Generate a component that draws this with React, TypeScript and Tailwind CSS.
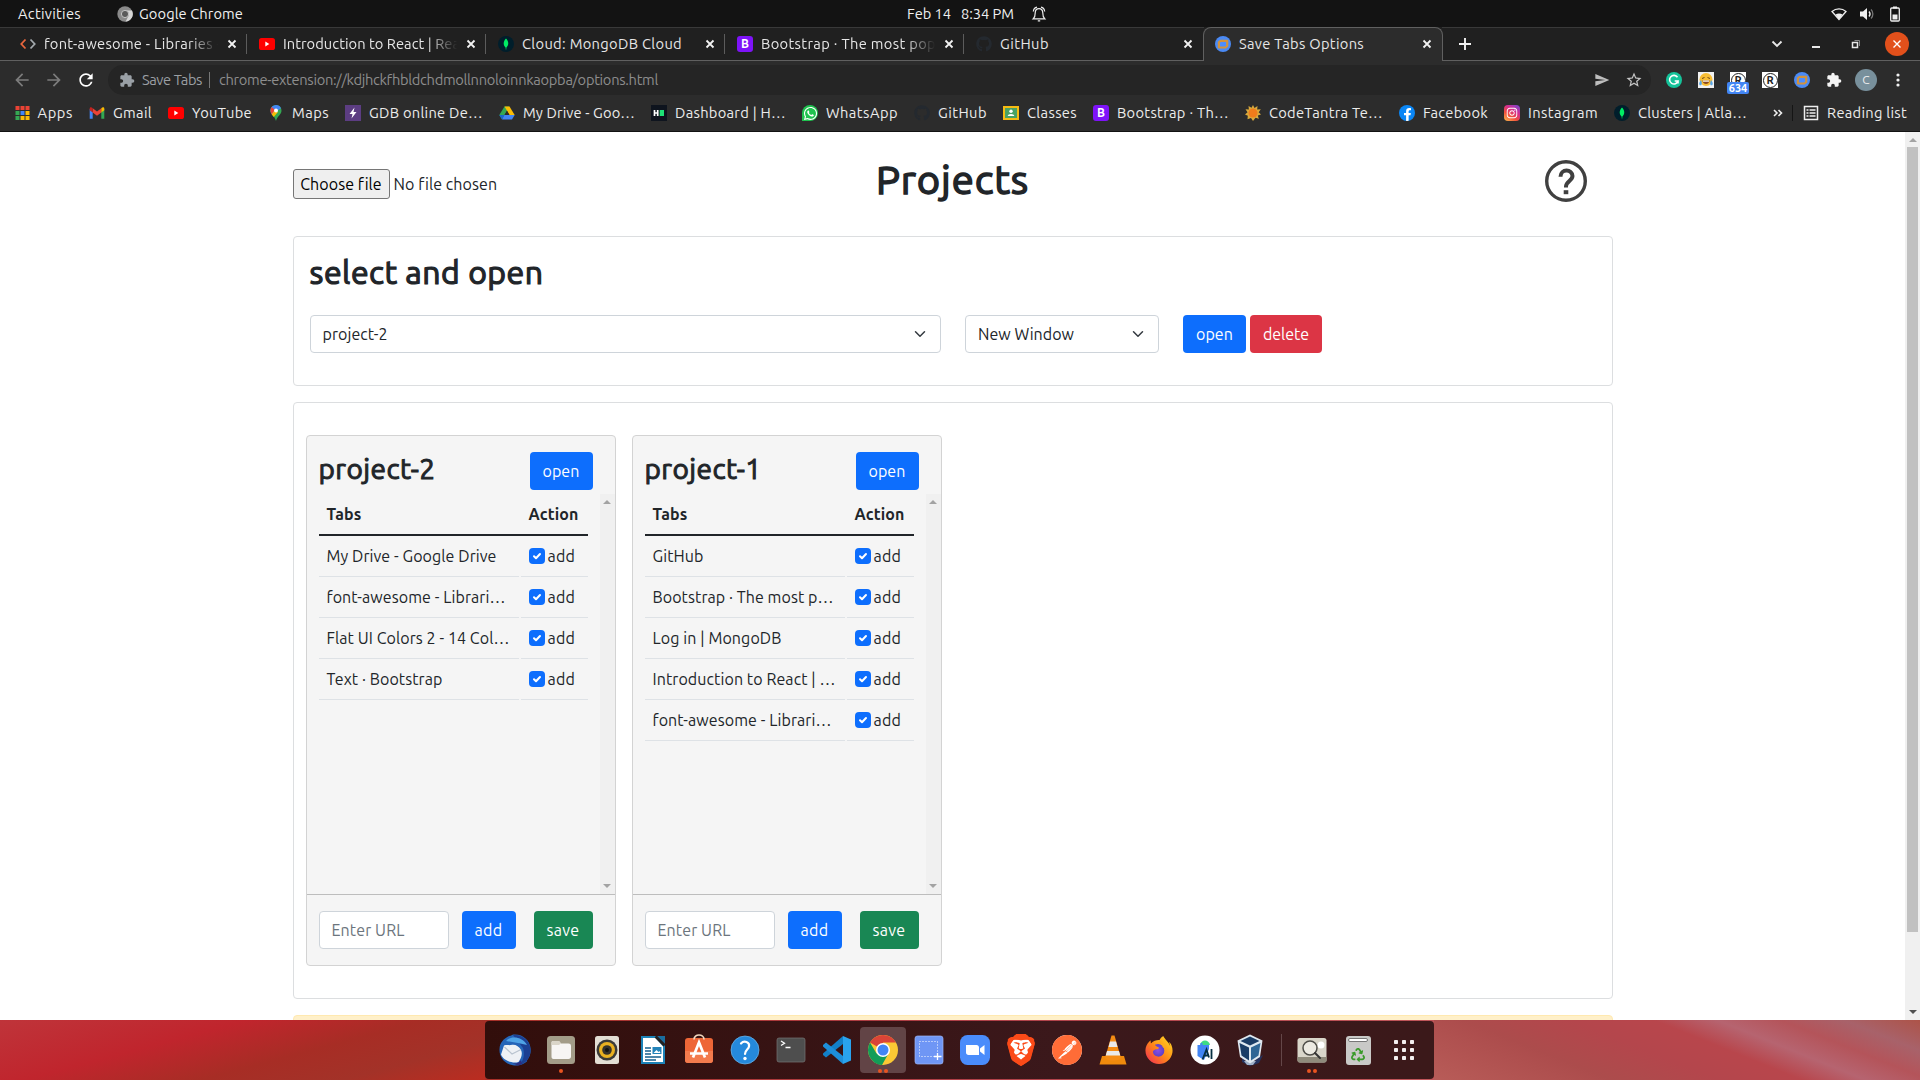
import { useLayoutEffect, useRef, type ReactNode } from "react";
import { MdArrowBack, MdArrowForward, MdRefresh, MdExtension, MdSend, MdStarBorder } from "react-icons/md";
import { FaGithub, FaRecycle, FaInstagram, FaWhatsapp, FaFacebookF } from "react-icons/fa";
import { SiBrave, SiPostman, SiFirefoxbrowser } from "react-icons/si";

/* A single line of text tracked so that it fills exactly `w` pixels. */
function T({ w, className = "", children }: { w: number; className?: string; children: string }) {
  const ref = useRef<HTMLSpanElement>(null);
  useLayoutEffect(() => {
    const el = ref.current;
    if (!el) return;
    el.style.letterSpacing = "0px";
    const natural = el.getBoundingClientRect().width;
    el.style.letterSpacing = `${(w - natural) / children.length}px`;
  }, [w, children]);
  return (
    <span ref={ref} className={`inline-block shrink-0 whitespace-pre ${className}`}>
      {children}
    </span>
  );
}

/* ---------- small icons ---------- */

const YouTube = () => (
  <svg viewBox="0 0 16 16" className="size-4">
    <rect x="0" y="2" width="16" height="12" rx="2.6" fill="#f00" />
    <path d="M6.3 5.5v5l4-2.5z" fill="#fff" />
  </svg>
);
const Mongo = () => (
  <svg viewBox="0 0 16 16" className="size-4">
    <circle cx="8" cy="8" r="8" fill="#001e2b" />
    <path d="M8 2.6c2.8 2.9 3.2 6.5.3 9.1V13.4h-.6v-1.7C4.8 9.1 5.2 5.5 8 2.6z" fill="#00ed64" />
  </svg>
);
const Boot = () => (
  <span className="flex size-4 items-center justify-center rounded-[3px] bg-[#7e13f8] text-[12px] leading-4 font-bold text-white">B</span>
);
const GitHub = () => <FaGithub className="size-4 text-[#24292f]" />;
const SaveTabs = () => (
  <svg viewBox="0 0 16 16" className="size-4">
    <circle cx="8" cy="8" r="8" fill="#4a8af5" />
    <path d="M5.6 4.8h6.600v5.200l-1.700 1.500H3.900V6.300z" fill="#4c8dff" stroke="#d0923f" strokeWidth="2.200" strokeLinejoin="round" />
  </svg>
);
const Brackets = () => (
  <svg viewBox="0 0 16 16" className="size-4" fill="none" strokeWidth="1.8">
    <path d="M5.500 3.500 1.300 8l4.200 4.500" stroke="#e8663d" />
    <path d="M10.500 3.500 14.700 8l-4.200 4.500" stroke="#a3a9ad" />
  </svg>
);
const AppsGrid = () => (
  <svg viewBox="0 0 16 16" className="size-4">
    {["#ea4335", "#ea4335", "#ea4335", "#34a853", "#4285f4", "#fbbc04", "#34a853", "#fbbc04", "#fbbc04"].map((c, i) => (
      <rect key={i} x={1.5 + (i % 3) * 5} y={1 + Math.floor(i / 3) * 5} width="4" height="4" fill={c} />
    ))}
  </svg>
);
const Gmail = () => (
  <svg viewBox="0 0 16 16" className="size-4">
    <path d="M.7 4v9.800h3V7.200z" fill="#4285f4" />
    <path d="M15.300 4v9.800h-3V7.200z" fill="#34a853" />
    <path d="M3.700 3.200 8 6.500l4.300-3.300v4.300L8 10.700 3.700 7.500z" fill="#ea4335" />
    <path d="M.7 3.800c0-1.700 1.700-1.900 3-.6v4.300L.7 5.300z" fill="#c5221f" />
    <path d="M15.300 3.800c0-1.700-1.700-1.900-3-.6v4.300l3-2.200z" fill="#fbbc04" />
  </svg>
);
const Maps = () => (
  <svg viewBox="0 0 16 16" className="size-4">
    <path d="M8 0a5.500 5.500 0 0 1 5.500 5.500C13.500 9.500 9.300 11 8 16 6.700 11 2.500 9.500 2.500 5.500A5.500 5.500 0 0 1 8 0z" fill="#34a853" />
    <path d="M8 0a5.500 5.500 0 0 1 5 3.200L4 9.500C3.200 8.600 2.500 7.300 2.500 5.500A5.500 5.500 0 0 1 8 0z" fill="#4285f4" />
    <path d="M3.700 2 7 5l-3.300 4.200C2 6.800 2 4 3.700 2z" fill="#ea4335" />
    <path d="M10 7 5.700 12C4.800 10.800 4.200 10 3.700 9.200L7 5z" fill="#fbbc04" />
    <circle cx="8" cy="5.500" r="2" fill="#fff" />
  </svg>
);
const Gdb = () => (
  <svg viewBox="0 0 16 16" className="size-4">
    <path d="M0 0h16v16H0z" fill="#5c3d82" />
    <path d="M9.500 2.500 4.500 9h3l-1 4.500 5-6.500h-3z" fill="#fff" />
  </svg>
);
const Drive = () => (
  <svg viewBox="0 0 16 16" className="size-4">
    <path d="M5.500 1.500h5L8 5.800 3 14.300.3 10z" fill="#34a853" />
    <path d="M10.500 1.500 15.700 10H10.500L5.500 1.500z" fill="#fbbc04" />
    <path d="M5.300 10h10.400L13 14.500H3z" fill="#4285f4" />
    <path d="M.3 10h5L3 14.500z" fill="#1967d2" />
    <path d="M8 5.800 10.400 10H5.500z" fill="#2b2b2b" />
  </svg>
);
const Hacker = () => (
  <svg viewBox="0 0 16 16" className="size-4">
    <path d="M0 0h16v16H0z" fill="#0e141e" />
    <path d="M3.500 5v6M6.700 5v6M3 8h3.500" stroke="#fff" strokeWidth="1.700" />
    <path d="M8.700 5h4.300v6H8.700z" fill="#1ee276" />
  </svg>
);
const WhatsApp = () => (
  <span className="flex size-4 items-center justify-center rounded-full rounded-bl-[3px] bg-[#1fc24f]">
    <FaWhatsapp className="size-[15px] text-white" />
  </span>
);
const Classes = () => (
  <svg viewBox="0 0 16 16" className="size-4">
    <path d="M0 1h16v14H0z" fill="#f6bb13" />
    <path d="M2 3h12v10H2z" fill="#4aa265" />
    <circle cx="8" cy="6.300" r="1.700" fill="#fff" />
    <path d="M4.700 11c0-2.700 6.600-2.700 6.600 0z" fill="#fff" />
  </svg>
);
const Sun = () => (
  <svg viewBox="0 0 16 16" className="size-4">
    <path d="M8 0l1.500 3 3-2-.3 3.500 3.600-.2-2.100 2.900L16 9.500l-3.200 1 1 3.200-3.300-.9L8 16l-2-3-3.500 1.200.3-3.500L0 9.500 2.500 7.300.5 4.300l3.400.2L3.500 1l3 1.800z" fill="#d9a93c" />
    <circle cx="8" cy="8" r="4.500" fill="#f07c1b" />
  </svg>
);
const Facebook = () => (
  <span className="flex size-4 items-end justify-center overflow-hidden rounded-full bg-[#0a86f5]">
    <FaFacebookF className="size-[13px] text-white" />
  </span>
);
const Instagram = () => (
  <span className="flex size-4 items-center justify-center rounded-[4px] bg-[linear-gradient(35deg,#fdc04e,#f2503c_35%,#d22c92_65%,#6a4bd8)]">
    <FaInstagram className="size-3 text-white" />
  </span>
);

/* ---------- desktop top bar ---------- */

function TopBar() {
  return (
    <div className="grid h-[27px] grid-cols-3 items-center bg-[#131313] text-[14.67px] text-[#f0f0f0]">
      <div className="flex items-center pl-[18px]">
        <T w={63}>Activities</T>
        <svg viewBox="0 0 16 16" className="ml-[36px] size-4">
          <circle cx="8" cy="8" r="7.700" fill="#8a8a8a" />
          <path d="M8 4.500h7A7.700 7.700 0 0 1 8.500 15.700l3-5.700z" fill="#d6d6d6" />
          <circle cx="8" cy="8" r="3.600" fill="#5a5a5a" stroke="#c4c4c4" />
        </svg>
        <T w={104} className="ml-1.5">Google Chrome</T>
      </div>
      <div className="flex items-center justify-center pl-[34px]">
        <T w={44}>Feb 14</T>
        <T w={53} className="ml-2.5">8:34 PM</T>
        <svg viewBox="0 0 16 16" className="ml-[17px] size-4" fill="none" stroke="#ececec" strokeWidth="1.200">
          <path d="M2.300 12.800h11.400c-1.400-1.200-1.900-2.600-1.900-5.800C11.800 4.200 10.300 2.600 8 2.600S4.200 4.200 4.200 7c0 3.200-.5 4.600-1.900 5.800z" />
          <path d="M6 1.200C4 1.600 2.600 3 2.300 5.500M10 1.200c2 .4 3.400 1.800 3.700 4.300M6.800 14.900h2.400" />
        </svg>
      </div>
      <div className="flex items-center justify-end gap-3 pr-[17px]">
        <svg viewBox="0 0 16 16" className="size-4">
          <path d="M1 5.500C5 2 11 2 15 5.500L8 13.500z" fill="none" stroke="#eee" strokeWidth="1.300" />
          <path d="M4.500 8.500c2-1.500 5-1.500 7 0L8 13.500z" fill="#eee" />
        </svg>
        <svg viewBox="0 0 16 16" className="size-4">
          <path d="M1 5.500h3L8 2v12L4 10.500H1z" fill="#eee" />
          <path d="M10 5.500c1.300 1.500 1.300 3.500 0 5" fill="none" stroke="#eee" strokeWidth="1.300" />
          <path d="M12 3.500c2.500 2.500 2.500 6.500 0 9" fill="none" stroke="#777" strokeWidth="1.300" />
        </svg>
        <svg viewBox="0 0 16 16" className="size-4">
          <path d="M6 .5h4v2H6z" fill="#eee" />
          <rect x="3.700" y="2" width="8.600" height="13" rx="1" fill="none" stroke="#eee" strokeWidth="1.300" />
          <path d="M5.500 8.500h5v5h-5z" fill="#eee" />
        </svg>
      </div>
    </div>
  );
}

/* ---------- browser chrome ---------- */

const Close = () => (
  <svg viewBox="0 0 10 10" className="size-2.5 shrink-0" stroke="#f2f2f2" strokeWidth="1.800">
    <path d="M1.500 1.500l7 7M8.500 1.500l-7 7" />
  </svg>
);

const tabs: { icon: ReactNode; title: string; w: number; fade?: boolean }[] = [
  { icon: <Brackets />, title: "font-awesome - Libraries -", w: 177, fade: true },
  { icon: <YouTube />, title: "Introduction to React | Rea", w: 177, fade: true },
  { icon: <Mongo />, title: "Cloud: MongoDB Cloud", w: 160 },
  { icon: <Boot />, title: "Bootstrap · The most pop", w: 175, fade: true },
  { icon: <GitHub />, title: "GitHub", w: 49 },
];

function TabStrip() {
  return (
    <div className="flex h-[34px] bg-[#202020] text-[14.67px] text-[#e6e6e6]">
      <div className="flex w-[1204px] border-t border-b border-t-[#393939] border-b-[#606060] pl-2">
        {tabs.map((t, i) => (
          <div key={i} className="flex w-[239px] items-center pl-3">
            {t.icon}
            <div className={`ml-2 w-[176px] ${t.fade ? "[mask-image:linear-gradient(90deg,#000_82%,transparent_99%)]" : ""}`}>
              <T w={t.w}>{t.title}</T>
            </div>
            <span className="ml-[7px]"><Close /></span>
            {i < 4 && <span className="ml-auto h-5 w-px bg-[#5c5c5c]" />}
          </div>
        ))}
      </div>
      <div className="z-10 -mx-px flex w-[240px] items-center rounded-t-lg border border-b-0 border-[#606060] bg-[#2c2c2c] pb-px pl-[11px]">
        <SaveTabs />
        <div className="ml-2 w-[176px]"><T w={125}>Save Tabs Options</T></div>
        <span className="ml-[7px]"><Close /></span>
      </div>
      <div className="flex flex-1 items-center border-t border-b border-t-[#393939] border-b-[#606060] pl-4">
        <svg viewBox="0 0 14 14" className="size-[14px]" stroke="#f2f2f2" strokeWidth="1.900">
          <path d="M7 1v12M1 7h12" />
        </svg>
        <svg viewBox="0 0 12 12" className="ml-auto size-3" fill="none" stroke="#e8e8e8" strokeWidth="1.900">
          <path d="M1.500 3.500 6 8l4.500-4.500" />
        </svg>
        <span className="mt-1.5 ml-[29px] h-[1.5px] w-2 bg-[#e8e8e8]" />
        <svg viewBox="0 0 10 10" className="ml-[31px] size-2.5" fill="none" stroke="#e8e8e8">
          <path d="M1.500 3.500h5v5h-5z" strokeWidth="1.500" />
          <path d="M3.500 1.500h5v5.500" stroke="#888" />
        </svg>
        <span className="mr-[11px] ml-6 flex size-6 items-center justify-center rounded-full bg-[#e2501b]">
          <svg viewBox="0 0 10 10" className="size-2.5" stroke="#fff" strokeWidth="1.400">
            <path d="M1.500 1.500l7 7M8.500 1.500l-7 7" />
          </svg>
        </span>
      </div>
    </div>
  );
}

const Registered = () => (
  <span className="flex size-4 items-center justify-center bg-white">
    <span className="flex size-[15px] items-center justify-center rounded-full border border-[#222] text-[11px] leading-none font-bold text-[#222]">R</span>
  </span>
);

function Toolbar() {
  return (
    <div className="flex h-[37px] items-center bg-[#2c2c2c] pt-px pl-3 text-[14.67px]">
      <MdArrowBack className="size-5 text-[#7c7c7c]" />
      <MdArrowForward className="ml-3 size-5 text-[#7c7c7c]" />
      <MdRefresh className="ml-3 size-5 text-white" />
      <div className="ml-3 flex h-[30px] w-[1543px] items-center rounded-full bg-[#252525] pl-[11px]">
        <MdExtension className="size-4 text-[#9aa0a6]" />
        <T w={60} className="ml-[7px] text-[#9b9fa3]">Save Tabs</T>
        <span className="ml-[7px] h-4 w-px bg-[#777]" />
        <T w={439} className="ml-[9px] text-[#8d8d8d]">chrome-extension://kdjhckfhbldchdmollnnoloinnkaopba/options.html</T>
        <MdSend className="ml-auto size-4 text-[#bdbdbd]" />
        <MdStarBorder className="mr-2 ml-[15px] size-[18px] text-[#c6c6c6]" />
      </div>
      <div className="ml-[15px] flex items-center gap-4">
        <span className="flex size-4 items-center justify-center rounded-full bg-[#15c39a]">
          <svg viewBox="0 0 16 16" className="size-4" fill="none" stroke="#fff" strokeWidth="1.600">
            <path d="M11.500 5.300A4.300 4.300 0 1 0 12 9H8.700M12 8.200v3.300" />
          </svg>
        </span>
        <svg viewBox="0 0 16 16" className="size-4">
          <path d="M0 0h16v16H0z" fill="#f1f1f1" />
          <circle cx="8" cy="7.500" r="6.500" fill="#f9be34" />
          <path d="M4.500 8.500h7c0 4.500-7 4.500-7 0z" fill="#8b4a20" />
          <path d="M5 8.500h6v1.200H5z" fill="#fff" />
          <path d="M4 6.500l2.500-1M12 6.500l-2.500-1" stroke="#6b4416" />
          <path d="M3 8c-2.300 2.500-2.300 5.300-.5 5.300S4 10.500 3 8zM13 8c2.300 2.500 2.300 5.300.5 5.300S12 10.500 13 8z" fill="#58a6e8" />
        </svg>
        <span className="relative">
          <Registered />
          <span className="absolute top-[10px] left-[-3px] flex h-3 w-[22px] items-center justify-center rounded-[2px] bg-[#4285f4] text-[11px] leading-none font-bold text-white">634</span>
        </span>
        <Registered />
        <SaveTabs />
        <MdExtension className="size-4 text-[#f4f4f4]" />
        <span className="-mx-[3px] flex size-[22px] items-center justify-center rounded-full bg-[#78909c] text-[12px] text-[#eee]">C</span>
        <svg viewBox="0 0 16 16" className="size-4" fill="#f0f0f0">
          <circle cx="8" cy="3" r="1.600" />
          <circle cx="8" cy="8" r="1.600" />
          <circle cx="8" cy="13" r="1.600" />
        </svg>
      </div>
    </div>
  );
}

const bookmarks: [ReactNode, string, number][] = [
  [<AppsGrid />, "Apps", 35.5],
  [<Gmail />, "Gmail", 39],
  [<YouTube />, "YouTube", 60],
  [<Maps />, "Maps", 37],
  [<Gdb />, "GDB online De…", 114],
  [<Drive />, "My Drive - Goo…", 112],
  [<Hacker />, "Dashboard | H…", 111],
  [<WhatsApp />, "WhatsApp", 72],
  [<GitHub />, "GitHub", 49],
  [<Classes />, "Classes", 50],
  [<Boot />, "Bootstrap · Th…", 112],
  [<Sun />, "CodeTantra Te…", 114],
  [<Facebook />, "Facebook", 65],
  [<Instagram />, "Instagram", 70],
  [<Mongo />, "Clusters | Atla…", 109],
];

function Bookmarks() {
  return (
    <div className="flex h-[34px] items-center border-b border-[#121212] bg-[#2c2c2c] pb-[3px] pl-[13.5px] text-[14.67px] text-[#ececec]">
      <div className="flex gap-4">
        {bookmarks.map(([icon, label, w], i) => (
          <div key={i} className="flex items-center gap-2">
            {icon}
            <T w={w}>{label}</T>
          </div>
        ))}
      </div>
      <svg viewBox="0 0 10 10" className="ml-[26px] size-2.5" fill="none" stroke="#eee" strokeWidth="1.600">
        <path d="M1 2l3 3-3 3M5.500 2l3 3-3 3" />
      </svg>
      <span className="ml-[9px] h-4 w-px bg-[#151515]" />
      <svg viewBox="0 0 16 16" className="ml-[10px] size-4" fill="none" stroke="#eee" strokeWidth="1.500">
        <path d="M1.500 1.500h13v13h-13zM3.500 5h2M3.500 8h2M3.500 11h2M6.500 5h6M6.500 8h6M6.500 11h6" />
      </svg>
      <T w={80} className="ml-2">Reading list</T>
    </div>
  );
}

/* ---------- page ---------- */

const Select = ({ label, tw, className }: { label: string; tw: number; className: string }) => (
  <div className={`flex h-[38px] items-center justify-between rounded-[4px] border border-[#ced4da] bg-white pr-[14px] pl-3 ${className}`}>
    <T w={tw}>{label}</T>
    <svg viewBox="0 0 16 16" className="size-3" fill="none" stroke="#343a40" strokeWidth="2" strokeLinecap="round" strokeLinejoin="round">
      <path d="M2 5l6 6 6-6" />
    </svg>
  </div>
);

const tone = { blue: "bg-[#0d6efd]", red: "bg-[#dc3545]", green: "bg-[#198754]" };

const Button = ({ label, tw, color, className = "" }: { label: string; tw: number; color: keyof typeof tone; className?: string }) => (
  <button className={`flex h-[38px] items-center rounded-[4px] px-[13px] text-white ${tone[color]} ${className}`}>
    <T w={tw}>{label}</T>
  </button>
);

type Project = { name: string; w: number; rows: [string, number][] };
const projects: Project[] = [
  {
    name: "project-2",
    w: 117,
    rows: [
      ["My Drive - Google Drive", 170],
      ["font-awesome - Librari…", 179],
      ["Flat UI Colors 2 - 14 Col…", 183],
      ["Text · Bootstrap", 116],
    ],
  },
  {
    name: "project-1",
    w: 117,
    rows: [
      ["GitHub", 51],
      ["Bootstrap · The most p…", 181],
      ["Log in | MongoDB", 129],
      ["Introduction to React | …", 183],
      ["font-awesome - Librari…", 179],
    ],
  },
];

const Arrow = ({ down, className = "" }: { down?: boolean; className?: string }) => (
  <svg viewBox="0 0 8 4" className={`h-1 w-2 ${className}`}>
    <path d={down ? "M0 0h8L4 4z" : "M0 4h8L4 0z"} fill="currentColor" />
  </svg>
);

function ProjectCard({ name, w, rows }: Project) {
  return (
    <div className="w-[310px] rounded-[4px] border border-[#d3d3d3] bg-[#f5f5f5]">
      <div className="flex h-[58px] justify-between pt-4 pr-[22px] pl-3">
        <h3 className="text-[28px] leading-[34px] [-webkit-text-stroke:1px_#212529]"><T w={w}>{name}</T></h3>
        <Button label="open" tw={37} color="blue" />
      </div>
      <div className="flex h-[400px] justify-between">
        <div className="ml-3 w-[269px]">
          <div className="flex h-[42px] items-center border-b-2 border-[#212529] font-bold">
            <T w={35} className="ml-2">Tabs</T>
            <T w={50} className="ml-[167px]">Action</T>
          </div>
          {rows.map(([title, tw]) => (
            <div key={title} className="flex h-[41px] gap-[2px]">
              <div className="flex w-[200px] items-center border-b border-[#dee2e6] pl-2"><T w={tw}>{title}</T></div>
              <div className="flex w-[67px] items-center gap-[3px] border-b border-[#dee2e6] pl-2">
                <svg viewBox="0 0 16 16" className="size-4">
                  <rect width="16" height="16" rx="4" fill="#0d6efd" />
                  <path d="M5 8.300l2 2 4-4.300" fill="none" stroke="#fff" strokeWidth="2" strokeLinecap="round" strokeLinejoin="round" />
                </svg>
                <T w={27.5}>add</T>
              </div>
            </div>
          ))}
        </div>
        <div className="flex w-[15px] flex-col items-center justify-between bg-[#f0f0f0] py-1.5 text-[#a3a3a3]">
          <Arrow />
          <Arrow down />
        </div>
      </div>
      <div className="flex border-t border-[#bdbdbd] py-4 pl-3">
        <div className="flex h-[38px] w-[130px] items-center rounded-[4px] border border-[#ced4da] bg-white pl-3 text-[#6c757d]">
          <T w={73}>Enter URL</T>
        </div>
        <Button label="add" tw={28} color="blue" className="ml-[13px]" />
        <Button label="save" tw={33} color="green" className="ml-[18px]" />
      </div>
    </div>
  );
}

function Page() {
  return (
    <div className="flex h-[888px] justify-between overflow-hidden bg-white text-[16px] text-[#212529]">
      <div className="ml-[292.5px] w-[1320px]">
        <div className="grid h-[104px] grid-cols-3 items-start">
          <div className="flex items-center pt-[37px]">
            <div className="flex h-[30px] w-[97px] items-center justify-center rounded-[3px] border border-[#767676] bg-[#efefef] text-black"><T w={81}>Choose file</T></div>
            <T w={103} className="ml-1">No file chosen</T>
          </div>
          <h1 className="pt-6 text-center text-[40px] leading-[48px] [-webkit-text-stroke:1.5px_#212529]"><T w={153}>Projects</T></h1>
          <svg viewBox="0 0 42 42" className="mt-7 mr-[26px] size-[42px] justify-self-end" fill="none" stroke="#404040">
            <circle cx="21" cy="21" r="19.300" strokeWidth="3.400" />
            <path d="M15.500 16.800c0-8.400 12-8 12-.7 0 4.500-6.500 5.400-6.500 10.400v1" strokeWidth="4" />
            <path d="M21 30.200v4" strokeWidth="4.600" />
          </svg>
        </div>
        <div className="h-[150px] rounded-[4px] border border-[#dcdee0] px-4 pt-4">
          <h2 className="h-[62px] text-[32px] leading-[38px] [-webkit-text-stroke:1.2px_#212529]"><T w={234}>select and open</T></h2>
          <div className="flex">
            <Select label="project-2" tw={65} className="w-[631.5px]" />
            <Select label="New Window" tw={96} className="ml-6 w-[194px]" />
            <Button label="open" tw={37} color="blue" className="ml-6" />
            <Button label="delete" tw={46} color="red" className="ml-1" />
          </div>
        </div>
        <div className="mt-4 flex h-[597px] items-start gap-4 rounded-[4px] border border-[#dcdee0] pt-8 pl-3">
          {projects.map((p) => <ProjectCard key={p.name} {...p} />)}
        </div>
        <div className="mt-4 h-10 rounded-[4px] border border-[#ffe9b0] bg-[#fff0c9]" />
      </div>
      <div className="flex w-[15px] flex-col items-center bg-[#f0f0f0]">
        <Arrow className="mt-1.5 text-[#a3a3a3]" />
        <div className="mt-[5px] h-[785px] w-[11px] bg-[#c1c1c1]" />
        <Arrow down className="mt-auto mb-1.5 text-[#505050]" />
      </div>
    </div>
  );
}

/* ---------- dock ---------- */

const S = ({ children }: { children: ReactNode }) => <svg viewBox="0 0 32 32" className="size-8">{children}</svg>;

const Thunderbird = () => (
  <S>
    <path d="M10 2c3 0 3-2 5-1.500 9-.5 16 6 16.700 14.500.3 6-2 9-3.700 11.500 0 1-.5 1.500-1.500 2-2 1.500-5 2.500-8 3C6 32 0 23 .5 15 .8 9 4 5 10 2z" fill="#2565b8" />
    <path d="M14 1c10-1 18 7 17.500 16C31 25 26 30 19.500 31.500 25 27 26 20 24 14z" fill="#1c3f92" />
    <path d="M7 7C12 1 24 3 28 11L19 9z" fill="#4fa3e6" />
    <path d="M5 11.500c3-1 5 0 7-.5 4-1 8 1 10 5 2 4 0 9-2.500 12C13 30 4 26 2 20.500z" fill="#eef1f5" />
    <path d="M5.500 13l7.500 7 9-4.500" fill="none" stroke="#b9c3cf" strokeWidth="1.200" />
    <path d="M13 29c4 1 7 0 9-3l1 4-4 1.500z" fill="#2b2f80" />
  </S>
);
const Files = () => (
  <S>
    <rect x="2" y="2" width="28" height="28" rx="3.500" fill="#a39c88" />
    <path d="M6.500 9c0-1.500.5-2 2-2H14l2 2.500h7.500c1.500 0 2.500.8 2.500 2.500v10.500c0 1.500-1 2.500-2.500 2.500h-15c-1.500 0-2-1-2-2.500z" fill="#f7f5f3" />
    <path d="M6.500 11V9c0-1.500.5-2 2-2H14l2 2.500-2 1.500z" fill="#dad5c8" />
  </S>
);
const Rhythmbox = () => (
  <S>
    <rect x="4" y="2" width="24" height="28" rx="2.500" fill="#e3ded4" />
    <circle cx="16" cy="16" r="10.500" fill="#3a3a38" />
    <circle cx="16" cy="16" r="8" fill="#e8b021" />
    <circle cx="16" cy="16" r="4.800" fill="#33312c" />
    <circle cx="16" cy="16" r="2" fill="#111" />
  </S>
);
const Writer = () => (
  <S>
    <path d="M5 3h14L27 12v17H5z" fill="#fff" stroke="#1c83b8" strokeWidth="2" />
    <path d="M20 2h8v8z" fill="#1a6d9e" />
    <path d="M18.500 2.500l9 9" stroke="#222" strokeWidth="2.500" />
    <path d="M8 14h6M8 17h6M8 20h6M8 23h16M8 26h11" stroke="#155f8d" strokeWidth="1.400" />
    <path d="M15.500 13h9v7h-9z" fill="#2383b9" />
    <path d="M16.500 19l3-3 2 2 1-1 1 2z" fill="#fff" />
  </S>
);
const Software = () => (
  <S>
    <rect x="2" y="4" width="28" height="25" rx="3" fill="#ee6637" />
    <path d="M2 17h28v9a3 3 0 0 1-3 3H5a3 3 0 0 1-3-3z" fill="#f37b4d" />
    <path d="M11 5.500c0-6 10-6 10 0" fill="none" stroke="#f1d7bf" strokeWidth="1.700" />
    <path d="M10 23.500l6-15 6 15M7 19.500h18" fill="none" stroke="#fff" strokeWidth="2.700" />
  </S>
);
const Help = () => (
  <S>
    <circle cx="16" cy="16" r="14" fill="#2589dc" stroke="#6fb9ee" strokeWidth=".7" />
    <path d="M12 9.500c3-3.500 9-1.500 8 3-.6 3-4 3.500-4 7.500" fill="none" stroke="#fff" strokeWidth="2.200" strokeLinecap="round" />
    <circle cx="16" cy="24.500" r="1.700" fill="#fff" />
  </S>
);
const Terminal = () => (
  <S>
    <rect x="2" y="4" width="28" height="24" rx="2" fill="#4e4e4e" stroke="#777" strokeWidth=".7" />
    <path d="M6 7l3.500 2.300L6 11.500M10.500 13.500h5" fill="none" stroke="#fff" strokeWidth="1.300" />
  </S>
);
const Code = () => (
  <S>
    <path d="M22 2l8 3.500v21L22 30z" fill="#29a3ee" />
    <path d="M22 2v8L5 23.500 2 21v-1.500z" fill="#1280c8" />
    <path d="M22 30v-8L5 8.500 2 11v1.500z" fill="#1d8fda" />
  </S>
);
const Chrome = () => (
  <S>
    <circle cx="16" cy="16" r="15" fill="#fbc834" />
    <path d="M16 16 3 8.500A15 15 0 0 1 29 8.500H16z" fill="#db4437" />
    <path d="M3 8.500A15 15 0 0 0 15 31l6.500-11.500L16 16l-6.500 3.500z" fill="#129d58" />
    <circle cx="16" cy="16" r="7" fill="#fff" />
    <circle cx="16" cy="16" r="5.500" fill="#4285f4" />
  </S>
);
const Screenshot = () => (
  <S>
    <rect x="2" y="2" width="28" height="28" rx="2.500" fill="#6f96f5" stroke="#a0b9f8" strokeWidth=".7" />
    <path d="M6.500 7.500h18v15h-18z" fill="none" stroke="#fff" strokeDasharray="1 2" />
    <path d="M21 22.500h7.500M24.500 19v7" stroke="#fff" strokeWidth="1.300" />
  </S>
);
const Zoom = () => (
  <S>
    <rect x="1" y="1" width="30" height="30" rx="7.500" fill="#4a8cfb" />
    <path d="M7 11h10.500c1.500 0 2.500 1 2.500 2.500V21H9.500C8 21 7 20 7 18.500zM21 14.500l4.500-3.500v10L21 17.500z" fill="#fff" />
  </S>
);
const Brave = () => (
  <span className="relative flex size-8 items-center justify-center">
    <svg viewBox="0 0 32 32" className="size-8">
      <path d="M10 1h12l3 3h3l2 5-1 3-4 14-9 6-9-6L3 12 2 9l2-5h3z" fill="#fb4a18" />
      <path d="M8 6l4-.5 4 1 4-1 4 .5 4 6-4 8.500-1 3-7 5-7-5-1-3L4 12z" fill="#fff" />
    </svg>
    <SiBrave className="absolute size-8 text-[#fb4a18]" />
  </span>
);
const Vlc = () => (
  <S>
    <path d="M5 22h22l2.500 8.500h-27z" fill="#f08a0c" />
    <path d="M14.500 1.500h3L24 24c-2 3.500-14 3.500-16 0z" fill="#f58c14" />
    <path d="M13 7.500h6l1.500 5.500h-9zM10 17h12l1.300 4.500H8.700z" fill="#e9e9e9" />
  </S>
);
const Firefox = () => (
  <svg viewBox="0 0 32 32" className="size-8">
    <linearGradient id="fox" x1="1" y1="0" x2="0" y2="1">
      <stop offset="0" stopColor="#ffe226" />
      <stop offset=".5" stopColor="#ff8a16" />
      <stop offset="1" stopColor="#f0255a" />
    </linearGradient>
    <radialGradient id="globe">
      <stop offset="0" stopColor="#8a4fe6" />
      <stop offset="1" stopColor="#5b3fc4" />
    </radialGradient>
    <circle cx="16" cy="17" r="11" fill="url(#fox)" />
    <circle cx="15" cy="16.500" r="6.500" fill="url(#globe)" />
    <SiFirefoxbrowser x="2" y="2" size={28} fill="url(#fox)" color="url(#fox)" />
  </svg>
);
const Android = () => (
  <S>
    <circle cx="16" cy="16" r="14.500" fill="#fff" />
    <path d="M11 11c1-6 9-6 10 0z" fill="#3ddc84" />
    <path d="M8.500 11h3V9h2v2h6.500v4l-5 11-6.500-4z" fill="#4285f4" />
    <path d="M13.500 25.500l4-10 2.500 8M14.500 21.500h5M22.500 15v10" fill="none" stroke="#073042" strokeWidth="1.800" />
  </S>
);
const VBox = () => (
  <svg viewBox="0 0 32 32" className="mr-[3px] size-8">
    <path d="M8 24l8 7 8-7 5-3-4 8-9 3-8-4z" fill="#24335f" />
    <path d="M10 27h12l-3 4h-6z" fill="#9fb0c8" />
    <path d="M3.500 6.500 16 .5l12.500 6L26 23l-10 6.500L6 23z" fill="#dfe8f0" />
    <path d="M6.500 7 16 2.500 25.500 7 16 11.500zM5.500 9l9.500 4.500v13l-7.500-5z" fill="#1a3c66" />
    <path d="M26.500 9 17 13.500v13l7.500-5z" fill="#2f6595" />
  </svg>
);
const Viewer = () => (
  <S>
    <rect x="1.500" y="4" width="29" height="24.500" rx="2.500" fill="#d9d6ca" />
    <path d="M1.500 23h29v3a2.500 2.500 0 0 1-2.500 2.500H4A2.500 2.500 0 0 1 1.500 26z" fill="#8f8b7c" />
    <circle cx="25" cy="11" r="3.500" fill="#fff" />
    <circle cx="14" cy="14" r="7" fill="#eceae2" stroke="#4e4d48" strokeWidth="1.500" />
    <path d="M19 19l5 5" stroke="#333" strokeWidth="2" strokeLinecap="round" />
  </S>
);
const Trash = () => (
  <span className="flex h-[29px] w-[25px] flex-col items-center rounded-[3px] bg-[#c9c9c7]">
    <span className="mt-[2px] h-1 w-5 rounded-sm border border-[#777] bg-white" />
    <FaRecycle className="mt-1.5 size-[14px] text-[#3a9a2a]" />
  </span>
);
const Grid = () => (
  <svg viewBox="0 0 20 20" className="size-5" fill="#f3efef">
    {[0, 8, 16].flatMap((y) => [0, 8, 16].map((x) => <rect key={`${x}-${y}`} x={x} y={y} width="4" height="4" rx=".8" />))}
  </svg>
);

type Launcher = { icon: ReactNode; dots?: number; active?: boolean };
const dock: Launcher[] = [
  { icon: <Thunderbird /> },
  { icon: <Files />, dots: 1 },
  { icon: <Rhythmbox /> },
  { icon: <Writer /> },
  { icon: <Software /> },
  { icon: <Help /> },
  { icon: <Terminal /> },
  { icon: <Code /> },
  { icon: <Chrome />, dots: 2, active: true },
  { icon: <Screenshot /> },
  { icon: <Zoom /> },
  { icon: <Brave /> },
  { icon: <span className="flex size-[30px] rounded-full bg-white"><SiPostman className="size-[30px] text-[#ff6c37]" /></span> },
  { icon: <Vlc /> },
  { icon: <Firefox /> },
  { icon: <Android /> },
  { icon: <VBox /> },
];
const dockEnd: Launcher[] = [{ icon: <Viewer />, dots: 2 }, { icon: <Trash /> }, { icon: <Grid /> }];

const DockItem = ({ icon, dots = 0, active }: Launcher) => (
  <div className={`relative flex h-[46px] w-[46px] items-center justify-center rounded ${active ? "bg-[#624446]" : ""}`}>
    {icon}
    {dots > 0 && (
      <div className="absolute inset-x-0 bottom-0 flex justify-center gap-[2px]">
        <span className="size-1 rounded-full bg-[#e95420]" />
        {dots > 1 && <span className="size-1 rounded-full bg-[#e95420]" />}
      </div>
    )}
  </div>
);

function Desktop() {
  return (
    <div className="flex h-[60px] bg-[#3b181b]">
      <div className="h-full w-[485px] bg-[linear-gradient(165deg,#bf343a_0%,#c0252d_35%,#a72d25_60%,#a33228_80%,#bb2c20_100%)]" />
      <div className="h-full w-[949px] bg-[linear-gradient(90deg,#a83028,#b04048_50%,#c0565a)] py-px">
        <div className="flex h-[58px] items-center rounded-[4px] bg-[linear-gradient(90deg,#320e0b,#3b181b_60%,#3b191a)] pl-[7px]">
          {dock.map((d, i) => <DockItem key={i} {...d} />)}
          <span className="mr-[7px] ml-[7px] h-8 w-px bg-[#644648]" />
          {dockEnd.map((d, i) => <DockItem key={i} {...d} />)}
        </div>
      </div>
      <div className="h-full flex-1 bg-[linear-gradient(22deg,#b85c58_0%,#ac4c4c_28%,#b4464c_45%,#b8464c_58%,#b66470_68%,#b4545a_78%,#a8626a_88%,#ad5348_100%)]" />
    </div>
  );
}

export default function App() {
  return (
    <div className="h-[1080px] w-[1920px] overflow-hidden font-['Ubuntu','Noto_Sans',sans-serif]">
      <TopBar />
      <TabStrip />
      <Toolbar />
      <Bookmarks />
      <Page />
      <Desktop />
    </div>
  );
}
